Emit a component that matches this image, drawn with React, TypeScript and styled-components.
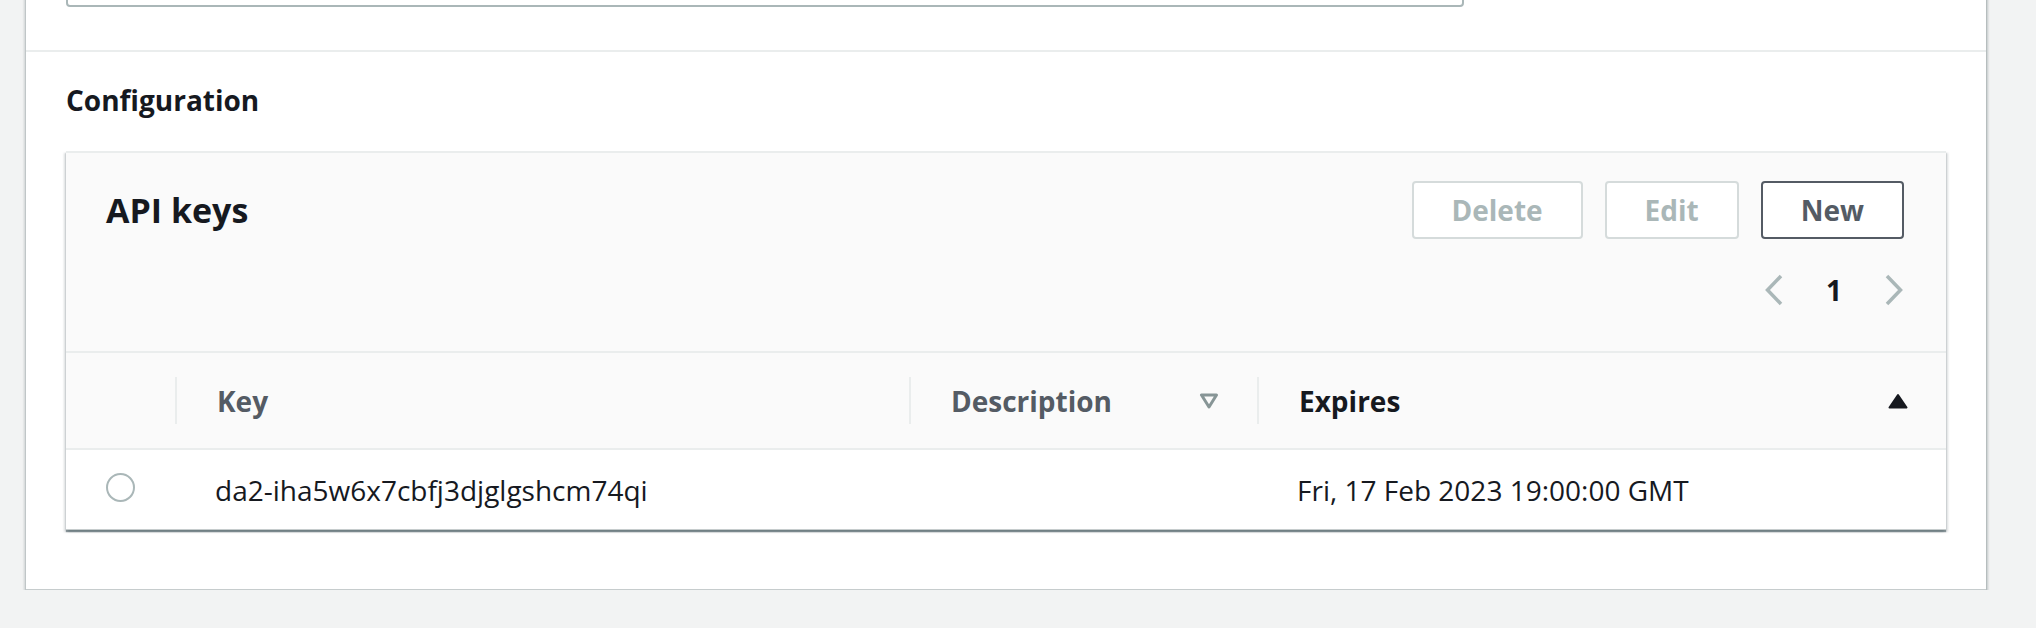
import React from 'react'
import styled, { createGlobalStyle } from 'styled-components'

const GlobalStyle = createGlobalStyle`
  html, body {
    margin: 0;
    padding: 0;
  }
  body {
    background: #f2f3f3;
    font-family: "Open Sans", "Noto Sans", Arial, sans-serif;
    color: #16191f;
    overflow: hidden;
  }
  * {
    box-sizing: border-box;
  }
`

const Page = styled.div`
  width: 1986px;
  padding-left: 26px;
`

const Card = styled.div`
  margin-top: -60px;
  background: #fff;
  border-bottom: 1px solid #c6cccd;
  box-shadow: 0 2px 1px 0 rgba(0, 28, 36, 0.45), 2px 2px 2px 0 rgba(0, 28, 36, 0.2),
    -2px 2px 2px 0 rgba(0, 28, 36, 0.15);
`

const TopSection = styled.div`
  padding: 40px 40px 43px;
  border-bottom: 2px solid #eaeded;
`

const InputBox = styled.div`
  width: 1398px;
  height: 27px;
  border: 2px solid #aab7b8;
  border-radius: 4px;
  background: #fff;
`

const ConfigSection = styled.div`
  padding: 28px 40px 59px;
`

const SectionTitle = styled.h3`
  margin: 0 0 31px;
  font-size: 28px;
  line-height: 40px;
  font-weight: 700;
`

const TableCard = styled.div`
  background: #fff;
  border-top: 2px solid #eaeded;
  border-bottom: 1px solid #c6cccd;
  box-shadow: 0 2px 1px 0 rgba(0, 28, 36, 0.4), 2px 2px 2px 0 rgba(0, 28, 36, 0.15),
    -2px 2px 2px 0 rgba(0, 28, 36, 0.15);
`

const TableHeader = styled.div`
  background: #fafafa;
  padding: 28px 42px 41px 40px;
  border-bottom: 2px solid #eaeded;
`

const TitleRow = styled.div`
  display: flex;
  align-items: center;
  justify-content: space-between;
  height: 58px;
`

const Title = styled.h2`
  margin: 0;
  font-size: 34px;
  line-height: 48px;
  font-weight: 700;
`

const ButtonGroup = styled.div`
  display: flex;
  gap: 22px;
`

const Button = styled.button<{ $disabled?: boolean }>`
  height: 58px;
  padding: 0 38px;
  border: 2px solid ${p => (p.$disabled ? '#d5dbdb' : '#545b64')};
  border-radius: 4px;
  background: #fff;
  color: ${p => (p.$disabled ? '#aab7b8' : '#545b64')};
  font-family: inherit;
  font-size: 28px;
  font-weight: 700;
  line-height: 40px;
`

const PagerRow = styled.div`
  margin-top: 31px;
  height: 40px;
  display: flex;
  align-items: center;
  justify-content: flex-end;
  gap: 42px;
`

const PageNumber = styled.span`
  font-size: 28px;
  font-weight: 700;
  line-height: 40px;
`

const Row = styled.div<{ $head?: boolean }>`
  display: grid;
  grid-template-columns: 109px 734px 348px 1fr;
  height: ${p => (p.$head ? '97px' : '79px')};
  background: ${p => (p.$head ? '#fafafa' : '#fff')};
  border-bottom: ${p => (p.$head ? '2px solid #eaeded' : 'none')};
`

const HeadCell = styled.div`
  display: flex;
  align-items: center;
  padding-right: 38px;
`

const Divider = styled.span`
  width: 2px;
  height: 47px;
  background: #eaeded;
`

const HeadLabel = styled.span<{ $active?: boolean }>`
  flex: 1;
  padding-left: 40px;
  font-size: 28px;
  font-weight: 700;
  line-height: 40px;
  color: ${p => (p.$active ? '#16191f' : '#545b64')};
`

const Cell = styled.div<{ $center?: boolean }>`
  display: flex;
  align-items: center;
  justify-content: ${p => (p.$center ? 'center' : 'flex-start')};
  padding-left: ${p => (p.$center ? '0' : '40px')};
  font-size: 28px;
  line-height: 40px;
`

const Radio = styled.span`
  width: 29px;
  height: 29px;
  margin-top: -4px;
  border: 2px solid #aab7b8;
  border-radius: 50%;
  background: #fff;
`

const Chevron = ({ dir }: { dir: 'left' | 'right' }) => (
  <svg width="20" height="32" viewBox="0 0 20 32">
    <path
      d={dir === 'left' ? 'M17 2 L3.5 16 L17 30' : 'M3 2 L16.5 16 L3 30'}
      fill="none"
      stroke="#aab7b8"
      strokeWidth="3.5"
    />
  </svg>
)

const FilterIcon = () => (
  <svg width="20" height="16" viewBox="0 0 20 16">
    <path d="M2.5 2 H17.5 L10 14 Z" fill="none" stroke="#879596" strokeWidth="3" strokeLinejoin="round" />
  </svg>
)

const SortUpIcon = () => (
  <svg width="20" height="16" viewBox="0 0 20 16">
    <path d="M10 2 L18.5 14.5 H1.5 Z" fill="#16191f" stroke="#16191f" strokeWidth="2" strokeLinejoin="round" />
  </svg>
)

export default function App() {
  return (
    <Page>
      <GlobalStyle />
      <Card>
        <TopSection>
          <InputBox />
        </TopSection>
        <ConfigSection>
          <SectionTitle>Configuration</SectionTitle>
          <TableCard>
            <TableHeader>
              <TitleRow>
                <Title>API keys</Title>
                <ButtonGroup>
                  <Button $disabled>Delete</Button>
                  <Button $disabled>Edit</Button>
                  <Button>New</Button>
                </ButtonGroup>
              </TitleRow>
              <PagerRow>
                <Chevron dir="left" />
                <PageNumber>1</PageNumber>
                <Chevron dir="right" />
              </PagerRow>
            </TableHeader>
            <Row $head>
              <HeadCell />
              <HeadCell>
                <Divider />
                <HeadLabel>Key</HeadLabel>
              </HeadCell>
              <HeadCell>
                <Divider />
                <HeadLabel>Description</HeadLabel>
                <FilterIcon />
              </HeadCell>
              <HeadCell>
                <Divider />
                <HeadLabel $active>Expires</HeadLabel>
                <SortUpIcon />
              </HeadCell>
            </Row>
            <Row>
              <Cell $center>
                <Radio />
              </Cell>
              <Cell>da2-iha5w6x7cbfj3djglgshcm74qi</Cell>
              <Cell />
              <Cell>Fri, 17 Feb 2023 19:00:00 GMT</Cell>
            </Row>
          </TableCard>
        </ConfigSection>
      </Card>
    </Page>
  )
}
